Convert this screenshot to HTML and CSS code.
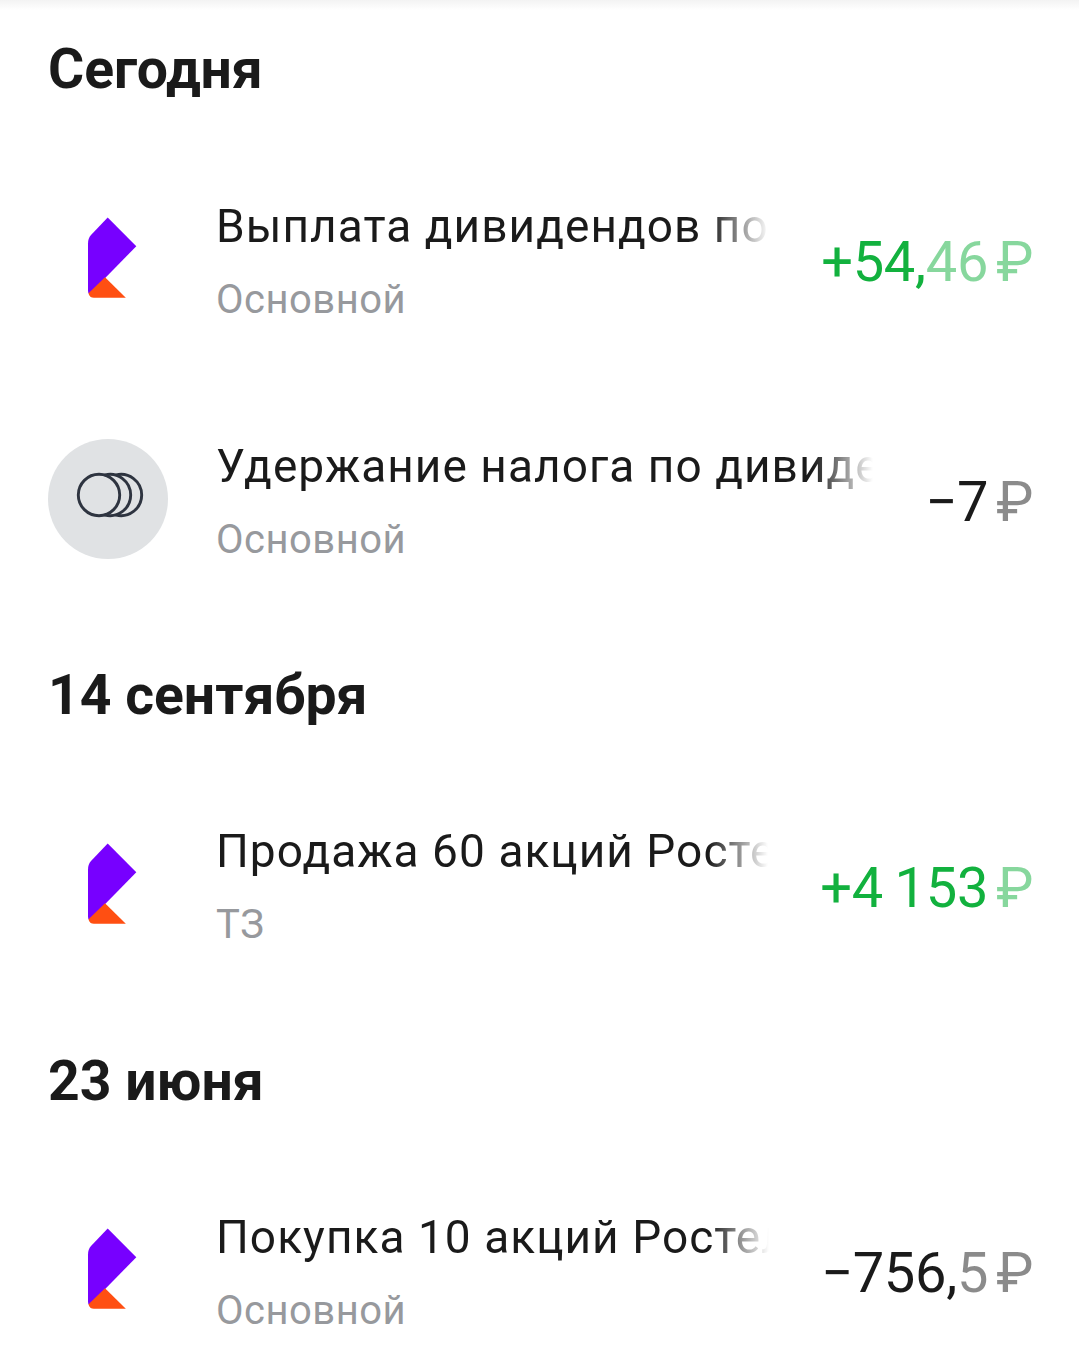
FILE: index.html
```html
<!DOCTYPE html>
<html lang="ru">
<head>
<meta charset="UTF-8">
<meta name="viewport" content="width=device-width, initial-scale=1.0">
<title>Операции</title>
<link rel="stylesheet" href="styles.css">
</head>
<body>
<svg class="defs" width="0" height="0">
  <symbol id="logo" viewBox="0 0 120 120">
    <path class="logo-violet" d="M59.7 18.5 L88.3 47.2 L42.5 94 Q40 96 40 91.5 L40 44.5 Q40 39.5 43 36 Z"/>
    <path class="logo-orange" d="M57 78.3 L77.8 98.8 L46 98.8 Q41.5 98.8 40.5 94.3 Z"/>
  </symbol>
</svg>

<main class="feed">
  <h2 class="day day-first">Сегодня</h2>
  <div class="row">
    <svg class="icon"><use href="#logo"/></svg>
    <div class="info">
      <div class="title">Выплата дивидендов по акциям</div>
      <div class="account">Основной</div>
    </div>
    <div class="amount plus">+54,<span class="dim">46</span><span class="dim rub">₽</span></div>
  </div>
  <div class="row">
    <div class="icon-round">
      <svg class="coins" viewBox="0 0 70 48">
        <circle cx="24" cy="24" r="20.7"/>
        <path d="M29.5 4.04 A20.7 20.7 0 1 1 29.5 43.96"/>
        <path d="M40.5 4.04 A20.7 20.7 0 1 1 40.5 43.96"/>
      </svg>
    </div>
    <div class="info">
      <div class="title">Удержание налога по дивидендам</div>
      <div class="account">Основной</div>
    </div>
    <div class="amount">−7<span class="dim rub">₽</span></div>
  </div>

  <h2 class="day">14 сентября</h2>
  <div class="row">
    <svg class="icon"><use href="#logo"/></svg>
    <div class="info">
      <div class="title">Продажа 60 акций Ростелеком</div>
      <div class="account">ТЗ</div>
    </div>
    <div class="amount plus">+4 153<span class="dim rub">₽</span></div>
  </div>

  <h2 class="day">23 июня</h2>
  <div class="row">
    <svg class="icon"><use href="#logo"/></svg>
    <div class="info">
      <div class="title">Покупка 10 акций Ростелеком</div>
      <div class="account">Основной</div>
    </div>
    <div class="amount">−756,<span class="dim">5</span><span class="dim rub">₽</span></div>
  </div>
</main>
</body>
</html>
```

FILE: styles.css
```css
html, body {
  margin: 0;
  background: #fff;
}

body {
  font-family: Roboto, "Noto Sans", sans-serif;
  color: #1a1a1a;
  overflow: hidden;
  background: linear-gradient(#f3f3f3, #fff 10px);
}

.defs {
  position: absolute;
}

.feed {
  padding: 0 46px 0 48px;
}

/* заголовки дат */
.day {
  margin: 0;
  height: 145.5px;
  padding-top: 47px;
  box-sizing: border-box;
  font-size: 55.3px;
  line-height: 59px;
  font-weight: 700;
  color: #1a1a1a;
}

.day-first {
  height: 139px;
  padding-top: 40px;
}

.row {
  display: flex;
  align-items: center;
  height: 240px;
}

.icon, .icon-round {
  flex: none;
  width: 120px;
  height: 120px;
}

.icon-round {
  display: flex;
  align-items: center;
  justify-content: center;
  border-radius: 50%;
  background: #e0e2e4;
}

.coins {
  width: 70px;
  height: 48px;
  margin: -8px 0 0 4px;
  fill: none;
  stroke: #2e3440;
  stroke-width: 2.9;
}

.logo-violet {
  fill: #7700ff;
}

.logo-orange {
  fill: #ff4f12;
}

.info {
  flex: 1;
  min-width: 0;
  margin: 0 52px 0 48px;
  padding-top: 3px;
}

.title {
  font-size: 46px;
  line-height: 54px;
  letter-spacing: 1.05px;
  white-space: nowrap;
  overflow: hidden;
  -webkit-mask-image: linear-gradient(to left, transparent 0, #000 60px);
  mask-image: linear-gradient(to left, transparent 0, #000 60px);
}

.account {
  margin-top: 23px;
  font-size: 40px;
  line-height: 47px;
  letter-spacing: 0.5px;
  color: #97999d;
}

.amount {
  flex: none;
  padding-top: 6px;
  font-size: 56px;
  line-height: 66px;
  letter-spacing: -0.3px;
  white-space: nowrap;
  word-spacing: -2px;
  color: #1a1a1a;
}

.amount.plus {
  color: #12b13e;
}

.dim {
  opacity: 0.5;
}

.rub {
  margin-left: 8px;
}
```
